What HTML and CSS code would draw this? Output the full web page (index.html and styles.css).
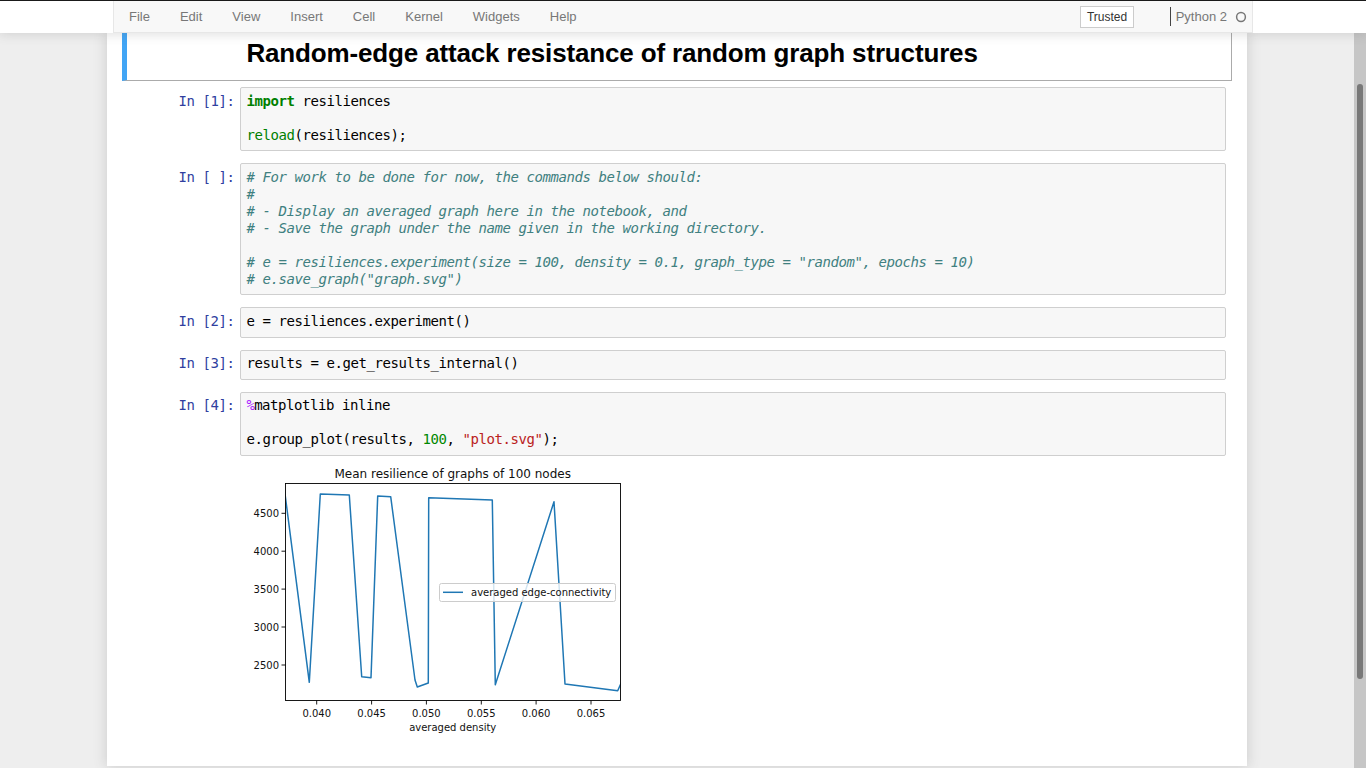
FILE: index.html
```html
<!DOCTYPE html>
<html>
<head>
<meta charset="utf-8">
<title>Notebook</title>
<link rel="stylesheet" href="styles.css">
</head>
<body>
<div class="header">
  <div class="menubar">
    <ul class="menu">
      <li>File</li>
      <li>Edit</li>
      <li>View</li>
      <li>Insert</li>
      <li>Cell</li>
      <li>Kernel</li>
      <li>Widgets</li>
      <li>Help</li>
    </ul>
    <div class="status">
      <span class="trusted">Trusted</span>
      <span class="kernel">Python 2</span>
      <svg class="kicon" width="12" height="12" viewBox="0 0 12 12"><circle cx="6" cy="6" r="4.4" fill="none" stroke="#777" stroke-width="1.5"/></svg>
    </div>
  </div>
</div>
<div class="main">
  <div class="site">
    <div class="notebook">
      <div class="cell md">
        <div class="prompt-space"></div>
        <div class="rendered"><h1>Random-edge attack resistance of random graph structures</h1></div>
      </div>

      <div class="cell">
        <div class="input">
          <div class="prompt">In&nbsp;[1]:</div>
          <div class="area"><pre><span class="kw">import</span> resiliences

<span class="bi">reload</span>(resiliences);</pre></div>
        </div>
      </div>

      <div class="cell">
        <div class="input">
          <div class="prompt">In&nbsp;[&nbsp;]:</div>
          <div class="area"><pre><span class="cm"># For work to be done for now, the commands below should:</span>
<span class="cm">#</span>
<span class="cm"># - Display an averaged graph here in the notebook, and</span>
<span class="cm"># - Save the graph under the name given in the working directory.</span>

<span class="cm"># e = resiliences.experiment(size = 100, density = 0.1, graph_type = "random", epochs = 10)</span>
<span class="cm"># e.save_graph("graph.svg")</span></pre></div>
        </div>
      </div>

      <div class="cell">
        <div class="input">
          <div class="prompt">In&nbsp;[2]:</div>
          <div class="area"><pre>e = resiliences.experiment()</pre></div>
        </div>
      </div>

      <div class="cell">
        <div class="input">
          <div class="prompt">In&nbsp;[3]:</div>
          <div class="area"><pre>results = e.get_results_internal()</pre></div>
        </div>
      </div>

      <div class="cell">
        <div class="input">
          <div class="prompt">In&nbsp;[4]:</div>
          <div class="area"><pre><span class="mg">%</span><span>matplotlib inline</span>

e.group_plot(results, <span class="nu">100</span>, <span class="st">"plot.svg"</span>);</pre></div>
        </div>
        <div class="output">
          <div class="prompt-space"></div>
          <svg class="plot" width="390" height="280" viewBox="240 460 390 280">
            <defs>
              <clipPath id="axclip"><rect x="285.5" y="483.5" width="335" height="217"/></clipPath>
            </defs>
            <text class="title" x="452.7" y="478.3" text-anchor="middle">Mean resilience of graphs of 100 nodes</text>
            <polyline clip-path="url(#axclip)" fill="none" stroke="#1f77b4" stroke-width="1.5" stroke-linejoin="round"
              points="284,486 309.3,682.3 320.3,494 349.3,495 361.7,676.7 371,677.7 377.7,496 390.7,496.7 415,680 417.3,687 428.3,683 428.7,497.7 492.3,500 495.3,684.7 554,501.7 565,684 617.7,690.7 622,681"/>
            <rect x="285.5" y="483.5" width="335" height="217" fill="none" stroke="#000" stroke-width="0.9"/>
            <g stroke="#000" stroke-width="0.9">
              <line x1="281.5" y1="513.3" x2="285.5" y2="513.3"/>
              <line x1="281.5" y1="551.2" x2="285.5" y2="551.2"/>
              <line x1="281.5" y1="589.1" x2="285.5" y2="589.1"/>
              <line x1="281.5" y1="627" x2="285.5" y2="627"/>
              <line x1="281.5" y1="665" x2="285.5" y2="665"/>
              <line x1="316.7" y1="700.5" x2="316.7" y2="704.5"/>
              <line x1="371.6" y1="700.5" x2="371.6" y2="704.5"/>
              <line x1="426.4" y1="700.5" x2="426.4" y2="704.5"/>
              <line x1="481.3" y1="700.5" x2="481.3" y2="704.5"/>
              <line x1="536.1" y1="700.5" x2="536.1" y2="704.5"/>
              <line x1="591" y1="700.5" x2="591" y2="704.5"/>
            </g>
            <g class="tick" text-anchor="end">
              <text x="279" y="517">4500</text>
              <text x="279" y="554.9">4000</text>
              <text x="279" y="592.8">3500</text>
              <text x="279" y="630.7">3000</text>
              <text x="279" y="668.7">2500</text>
            </g>
            <g class="tick" text-anchor="middle">
              <text x="316.7" y="717">0.040</text>
              <text x="371.6" y="717">0.045</text>
              <text x="426.4" y="717">0.050</text>
              <text x="481.3" y="717">0.055</text>
              <text x="536.1" y="717">0.060</text>
              <text x="591" y="717">0.065</text>
            </g>
            <text class="tick" x="452.7" y="730.5" text-anchor="middle">averaged density</text>
            <rect x="439.5" y="583.5" width="176" height="18" rx="2" fill="#fff" fill-opacity="0.8" stroke="#ccc" stroke-width="1"/>
            <line x1="443" y1="592.3" x2="463" y2="592.3" stroke="#1f77b4" stroke-width="1.5"/>
            <text class="tick" x="471" y="595.8">averaged edge-connectivity</text>
          </svg>
        </div>
      </div>
    </div>
  </div>
  <div class="scrollbar"><div class="thumb"></div></div>
</div>
</body>
</html>
```

FILE: styles.css
```css
html, body {
  margin: 0;
  padding: 0;
  height: 100%;
}

body {
  background: #eeeeee;
  overflow: hidden;
  display: flex;
  flex-direction: column;
  font-family: "Liberation Sans", Arial, sans-serif;
}

/* ---------- header / menubar ---------- */
.header {
  flex: none;
  height: 32px;
  border-top: 1px solid #1a1a1a;
  background: #ffffff;
  box-shadow: 0 0 12px 1px rgba(87, 87, 87, 0.2);
  position: relative;
  z-index: 2;
}

.menubar {
  width: 1140px;
  height: 32px;
  margin: 0 auto;
  box-sizing: border-box;
  background: #f8f8f8;
  border: 1px solid #e7e7e7;
  border-top: none;
  display: flex;
  align-items: center;
}

.menu {
  list-style: none;
  margin: 0;
  padding: 0;
  display: flex;
}

.menu li {
  padding: 0 15px;
  font-size: 13px;
  line-height: 18px;
  color: #777777;
}

.status {
  margin-left: auto;
  display: flex;
  align-items: center;
  padding-right: 5px;
}

.trusted {
  font-size: 12px;
  color: #333333;
  background: #ffffff;
  border: 1px solid #cccccc;
  height: 20px;
  line-height: 20px;
  padding: 0 5.5px;
  margin-right: 36px;
}

.kernel {
  font-size: 13px;
  color: #777777;
  border-left: 1px solid #444444;
  line-height: 19px;
  padding-left: 5px;
}

.kicon {
  display: block;
  margin-left: 8px;
}

/* ---------- main area ---------- */
.main {
  flex: 1;
  display: flex;
  min-height: 0;
}

.site {
  flex: 1;
  overflow: hidden;
}

.scrollbar {
  flex: none;
  width: 12px;
  background: #c6c6c6;
}

.thumb {
  width: 6px;
  height: 595px;
  margin: 51px 0 0 3px;
  background: #787878;
  border-radius: 3px;
}

.notebook {
  width: 1140px;
  margin: 0 auto;
  box-sizing: border-box;
  padding: 0 15px 20px;
  background: #ffffff;
  box-shadow: 0 0 12px 1px rgba(87, 87, 87, 0.2);
}

/* ---------- cells ---------- */
.cell {
  display: flex;
  flex-direction: column;
  padding: 5px;
  border: 1px solid transparent;
}

.cell.md {
  flex-direction: row;
  border: 1px solid #ababab;
  border-top: none;
  border-left: 5px solid #42a5f5;
  padding: 5px 5px 12px 1px;
}

.prompt-space {
  flex: none;
  width: 112px;
}

.rendered {
  flex: 1;
  padding-left: 5.6px;
}

.rendered h1 {
  margin: 0;
  font-family: "Liberation Sans", Arial, sans-serif;
  font-weight: bold;
  font-size: 26px;
  line-height: 30px;
  letter-spacing: -0.15px;
  color: #000000;
  padding-left: 0.8px;
}

.input {
  display: flex;
}

.prompt {
  flex: none;
  width: 112px;
  box-sizing: border-box;
  padding: 5.6px 5.6px 0 0;
  text-align: right;
  font-family: "DejaVu Sans Mono", monospace;
  font-size: 14px;
  line-height: 17px;
  letter-spacing: -0.43px;
  color: #303f9f;
  white-space: nowrap;
}

.area {
  flex: 1;
  background: #f7f7f7;
  border: 1px solid #cfcfcf;
  border-radius: 2px;
  padding: 4.6px 0 6.6px;
}

.area pre {
  margin: 0;
  padding: 0 5.6px;
  font-family: "DejaVu Sans Mono", monospace;
  font-size: 14px;
  line-height: 17px;
  letter-spacing: -0.43px;
  color: #000000;
}

.kw { color: #008000; font-weight: bold; }
.bi { color: #008000; }
.cm { color: #408080; font-style: italic; }
.nu { color: #008800; }
.st { color: #ba2121; }
.mg { color: #aa22ff; letter-spacing: -0.9px; }

/* ---------- output ---------- */
.output {
  display: flex;
  padding-top: 4px;
}

.plot {
  display: block;
  flex: none;
}

.plot text {
  font-family: "DejaVu Sans", sans-serif;
  fill: #111111;
}

.plot .title {
  font-size: 12px;
}

.plot .tick,
.plot .tick text {
  font-size: 10px;
}
```
